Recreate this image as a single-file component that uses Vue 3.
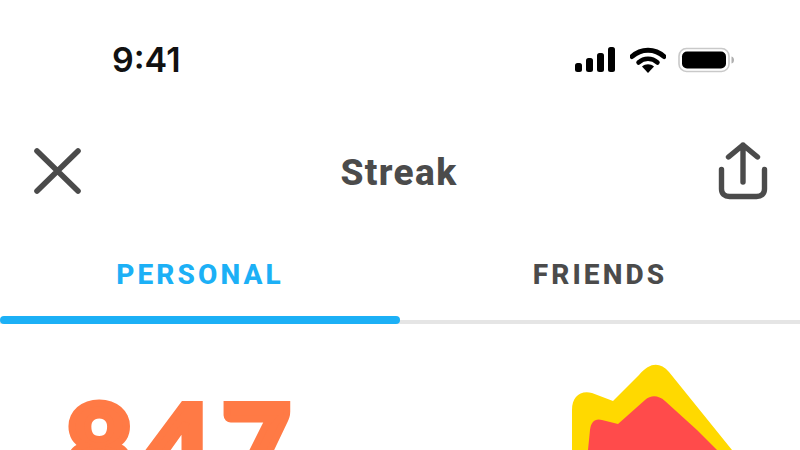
<script setup>
const tabs = [
  { label: 'PERSONAL', active: true },
  { label: 'FRIENDS', active: false },
]
</script>

<template>
  <div class="screen">
    <div class="status">
      <span class="time">9:41</span>
      <div class="status-icons">
        <svg class="signal" width="40" height="26" viewBox="0 0 40 26" fill="#000">
          <rect x="0" y="16" width="7" height="9" rx="2.5" />
          <rect x="11" y="11" width="7" height="14" rx="2.5" />
          <rect x="22" y="6" width="7" height="19" rx="2.5" />
          <rect x="33" y="0" width="7" height="25" rx="2.5" />
        </svg>
        <svg width="36" height="26" viewBox="0 0 36 26">
          <path d="M2 9.5C11 1 25 1 34 9.5" fill="none" stroke="#000" stroke-width="5" stroke-linecap="round" />
          <path d="M8.5 15.5C14 10.5 22 10.5 27.5 15.5" fill="none" stroke="#000" stroke-width="4.5" stroke-linecap="round" />
          <path d="M12 19.5C15.5 16.5 20.5 16.5 24 19.5L18 26Z" fill="#000" />
        </svg>
        <svg width="56" height="26" viewBox="0 0 56 26">
          <rect x="1" y="1.5" width="50" height="23" rx="7.5" fill="#fff" stroke="#c9c9c9" stroke-width="1.6" />
          <rect x="4" y="4.5" width="44" height="17" rx="5" fill="#000" />
          <path d="M53.5 9.5C55.5 10 56 11.5 56 13C56 14.5 55.5 16 53.5 16.5Z" fill="#b0b0b0" />
        </svg>
      </div>
    </div>

    <div class="nav">
      <svg class="nav-icon" width="50" height="50" viewBox="0 0 50 50" fill="none" stroke="#4b4b4b" stroke-width="5.6" stroke-linecap="round">
        <path d="M5 4L46 44M46 4L5 44" />
      </svg>
      <span class="title">Streak</span>
      <svg class="nav-icon" width="52" height="62" viewBox="0 0 52 62" fill="none" stroke="#4b4b4b" stroke-width="5.4" stroke-linecap="round" stroke-linejoin="round">
        <path d="M27 4V41M12.5 16L27 4L41.5 16" />
        <path d="M5.5 28.5V48C5.5 53 8.5 55.5 13.5 55.5H40.5C45.5 55.5 48.5 53 48.5 48V28.5" />
      </svg>
    </div>

    <div class="tabs">
      <div v-for="tab in tabs" :key="tab.label" class="tab" :class="{ active: tab.active }">
        <span class="tab-label">{{ tab.label }}</span>
      </div>
    </div>

    <div class="content">
      <span class="count">847</span>
      <svg class="flame" width="170" height="90" viewBox="570 360 170 90">
        <path d="M572 450V410C572 397 580 390 592 393L613 401L639 375C650 362 660 362 669 372L732 450Z" fill="#ffd900" />
        <path d="M588 450L590 430C591 422 595 418 602 420L618 424L645 400C651 395 658 395 665 401L697 430L717 450Z" fill="#ff4b4b" />
      </svg>
    </div>
  </div>
</template>

<style>
html, body {
  margin: 0;
  background: #fff;
}
</style>

<style scoped>
.screen {
  width: 800px;
  height: 450px;
  overflow: hidden;
  background: #fff;
  display: flex;
  flex-direction: column;
}
.status {
  height: 120px;
  flex: none;
  box-sizing: border-box;
  padding: 0 66px 0 112px;
  display: flex;
  justify-content: space-between;
  align-items: center;
}
.time {
  font: 600 34px/40px Inter, sans-serif;
  color: #111;
}
.status-icons {
  display: flex;
  align-items: center;
  gap: 12px;
}
.signal {
  margin-right: 3px;
}
.nav {
  height: 104px;
  flex: none;
  box-sizing: border-box;
  padding: 0 32px;
  display: flex;
  justify-content: space-between;
  align-items: center;
}
.title {
  font: 800 37px/44px Roboto, sans-serif;
  letter-spacing: 1.4px;
  color: #4b4b4b;
  padding-top: 2px;
}
.nav-icon {
  display: block;
}
.tabs {
  display: flex;
  flex: none;
  height: 100px;
}
.tab {
  flex: 1;
  height: 100px;
  box-sizing: border-box;
  border-bottom: 4px solid #e5e5e5;
  display: flex;
  align-items: center;
  justify-content: center;
  padding-top: 6px;
  position: relative;
  color: #4b4b4b;
}
.tab.active {
  color: #1cb0f6;
}
.tab.active::after {
  content: "";
  position: absolute;
  left: 0;
  right: 0;
  bottom: -4px;
  height: 8px;
  border-radius: 4px;
  background: #1cb0f6;
}
.tab-label {
  font: 800 28px/32px Roboto, sans-serif;
  letter-spacing: 3.1px;
}
.content {
  flex: none;
  display: flex;
  justify-content: space-between;
  padding: 36px 60px 0 65px;
}
.count {
  font: 900 118px/118px Lato, sans-serif;
  color: #ff7a45;
  -webkit-text-stroke: 7px #ff7a45;
  letter-spacing: 10px;
  margin-top: 26px;
}
.flame {
  display: block;
  flex: none;
}
</style>
